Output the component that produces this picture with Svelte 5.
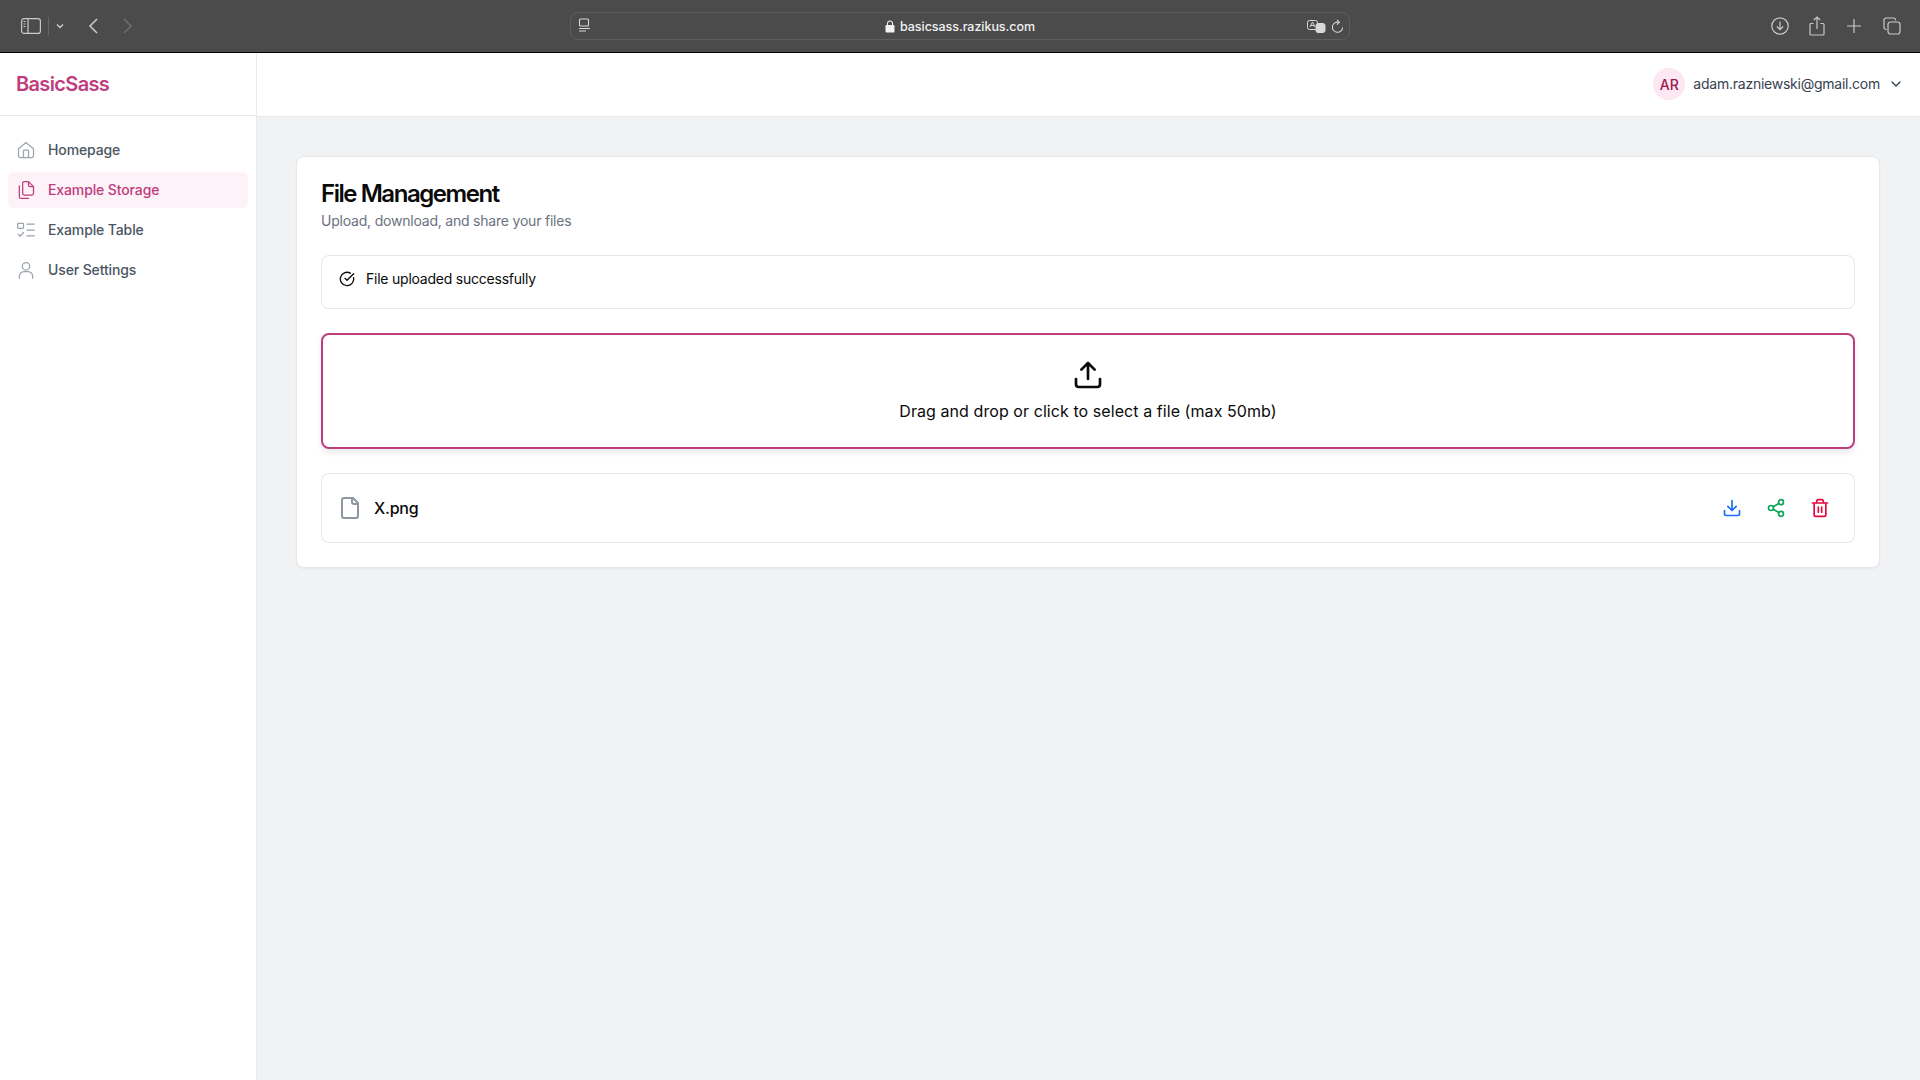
<script>
    const navItems = [
        { label: 'Homepage', icon: 'home' },
        { label: 'Example Storage', icon: 'copy', active: true },
        { label: 'Example Table', icon: 'list' },
        { label: 'User Settings', icon: 'user' }
    ];
</script>

<div class="browser">
    <div class="tools left">
        <svg class="sidebar-icon" viewBox="0 0 20 16" width="20" height="16" fill="none" stroke="currentColor" stroke-width="1.2">
            <rect x="0.6" y="0.6" width="18.8" height="14.8" rx="2.5" />
            <path d="M7 0.6v14.8M2.5 3.5h2M2.5 6h2M2.5 8.5h2" />
        </svg>
        <span class="divider"></span>
        <svg viewBox="0 0 8 6" width="8" height="6" fill="none" stroke="currentColor" stroke-width="1.5"><path d="M1 1.5l3 3 3-3" /></svg>
        <svg class="back" viewBox="0 0 10 16" width="10" height="16" fill="none" stroke="currentColor" stroke-width="1.6"><path d="M9 1L2 8l7 7" /></svg>
        <svg class="forward" viewBox="0 0 10 16" width="10" height="16" fill="none" stroke="currentColor" stroke-width="1.6"><path d="M1 1l7 7-7 7" /></svg>
    </div>

    <div class="address">
        <svg class="reader" viewBox="0 0 13 16" width="13" height="16" fill="none" stroke="currentColor" stroke-width="1.1">
            <rect x="1.5" y="1" width="9" height="7" rx="1" />
            <path d="M1 10.5h11M1 13h7" />
        </svg>
        <span class="url">
            <svg viewBox="0 0 10 13" width="10" height="13"><path fill="currentColor" d="M2 5V3.5a3 3 0 0 1 6 0V5h.5A1 1 0 0 1 9.500 6v5.500a1 1 0 0 1-1 1h-7a1 1 0 0 1-1-1V6a1 1 0 0 1 1-1zm1 0h4V3.500a2 2 0 0 0-4 0z" /></svg>
            basicsass.razikus.com
        </span>
        <span class="address-end">
            <svg viewBox="0 0 19 13" width="19" height="13" fill="none" stroke="currentColor" stroke-width="1">
                <rect x="0.5" y="0.5" width="10" height="9" rx="2" />
                <path d="M3 7l2.500-5 2.500 5M4 5.500h3" />
                <rect x="9" y="3.500" width="9" height="9" rx="2" fill="currentColor" />
            </svg>
            <svg viewBox="0 0 14 16" width="13" height="15" fill="none" stroke="currentColor" stroke-width="1.1">
                <path d="M8.500 3.500A5.500 5.500 0 1 0 12.500 9" />
                <path d="M6.500 0.800l2.500 2.700-2.500 2.500" />
            </svg>
        </span>
    </div>

    <div class="tools right">
        <svg viewBox="0 0 18 18" width="18" height="18" fill="none" stroke="currentColor" stroke-width="1.2">
            <circle cx="9" cy="9" r="8.200" />
            <path d="M9 4.500v8M5.800 9.500L9 12.700l3.200-3.200" />
        </svg>
        <svg class="share" viewBox="0 0 16 20" width="16" height="20" fill="none" stroke="currentColor" stroke-width="1.2">
            <path d="M4.500 7.500H2a1 1 0 0 0-1 1V18a1 1 0 0 0 1 1h12a1 1 0 0 0 1-1V8.500a1 1 0 0 0-1-1h-2.500" />
            <path d="M8 13V1M4.800 4L8 1l3.200 3" />
        </svg>
        <svg viewBox="0 0 14 14" width="14" height="14" fill="none" stroke="currentColor" stroke-width="1.2"><path d="M7 0v14M0 7h14" /></svg>
        <svg viewBox="0 0 18 18" width="18" height="18" fill="none" stroke="currentColor" stroke-width="1.2">
            <path d="M3.500 12.500H3a2 2 0 0 1-2-2V3a2 2 0 0 1 2-2h7.500a2 2 0 0 1 2 2v.5" />
            <rect x="5" y="5" width="12" height="12" rx="2.500" />
        </svg>
    </div>
</div>

<div class="page">
    <aside class="sidebar">
        <div class="logo">BasicSass</div>
        <nav>
            {#each navItems as item}
                <div class="nav-item" class:active={item.active}>
                    <svg viewBox="0 0 24 24" width="20" height="20" fill="none" stroke="currentColor" stroke-width="1.5" stroke-linecap="round" stroke-linejoin="round">
                        {#if item.icon === 'home'}
                            <path d="M3 10.500L12 3l9 7.500V19a2 2 0 0 1-2 2H5a2 2 0 0 1-2-2z" />
                            <path d="M9 21v-8a1 1 0 0 1 1-1h4a1 1 0 0 1 1 1v8" />
                        {:else if item.icon === 'copy'}
                            <path d="M15 2H10a2 2 0 0 0-2 2v12a2 2 0 0 0 2 2h9a2 2 0 0 0 2-2V8z" />
                            <path d="M15 2v4a2 2 0 0 0 2 2h4" />
                            <path d="M4 7v13a2 2 0 0 0 2 2h9" />
                        {:else if item.icon === 'list'}
                            <rect x="2" y="4" width="7" height="6" rx="1" />
                            <path d="M13 5h9M13 12h9M13 19h9M2.500 17l2.500 2.500L9 15" />
                        {:else}
                            <circle cx="12" cy="7.500" r="4.500" />
                            <path d="M4 22v-2.500A5.500 5.500 0 0 1 9.500 14h5a5.500 5.500 0 0 1 5.500 5.500V22" />
                        {/if}
                    </svg>
                    {item.label}
                </div>
            {/each}
        </nav>
    </aside>

    <div class="content">
        <header class="topbar">
            <span class="avatar">AR</span>
            <span class="email">adam.razniewski@gmail.com</span>
            <svg viewBox="0 0 24 24" width="16" height="16" fill="none" stroke="currentColor" stroke-width="2" stroke-linecap="round" stroke-linejoin="round"><path d="M6 9l6 6 6-6" /></svg>
        </header>

        <main>
            <section class="card">
                <h1>File Management</h1>
                <p class="subtitle">Upload, download, and share your files</p>

                <div class="alert">
                    <svg viewBox="0 0 24 24" width="16" height="16" fill="none" stroke="currentColor" stroke-width="2" stroke-linecap="round" stroke-linejoin="round">
                        <path d="M21.800 10A10 10 0 1 1 17 3.300" />
                        <path d="M9 11l3 3L22 4" />
                    </svg>
                    File uploaded successfully
                </div>

                <div class="dropzone">
                    <svg viewBox="0 0 24 24" width="32" height="32" fill="none" stroke="currentColor" stroke-width="2" stroke-linecap="round" stroke-linejoin="round">
                        <path d="M21 15v4a2 2 0 0 1-2 2H5a2 2 0 0 1-2-2v-4" />
                        <path d="M17 8l-5-5-5 5M12 3v12" />
                    </svg>
                    <span>Drag and drop or click to select a file (max 50mb)</span>
                </div>

                <div class="file-row">
                    <svg class="file-icon" viewBox="0 0 24 24" width="24" height="24" fill="none" stroke="currentColor" stroke-width="2" stroke-linecap="round" stroke-linejoin="round">
                        <path d="M15 2H6a2 2 0 0 0-2 2v16a2 2 0 0 0 2 2h12a2 2 0 0 0 2-2V7z" />
                        <path d="M14 2v4a2 2 0 0 0 2 2h4" />
                    </svg>
                    <span class="file-name">X.png</span>
                    <div class="actions">
                        <svg class="blue" viewBox="0 0 24 24" width="20" height="20" fill="none" stroke="currentColor" stroke-width="2" stroke-linecap="round" stroke-linejoin="round">
                            <path d="M21 15v4a2 2 0 0 1-2 2H5a2 2 0 0 1-2-2v-4" />
                            <path d="M7 10l5 5 5-5M12 15V3" />
                        </svg>
                        <svg class="green" viewBox="0 0 24 24" width="20" height="20" fill="none" stroke="currentColor" stroke-width="2" stroke-linecap="round" stroke-linejoin="round">
                            <circle cx="18" cy="5" r="3" />
                            <circle cx="6" cy="12" r="3" />
                            <circle cx="18" cy="19" r="3" />
                            <path d="M8.600 13.500l6.800 4M15.400 6.500l-6.800 4" />
                        </svg>
                        <svg class="red" viewBox="0 0 24 24" width="20" height="20" fill="none" stroke="currentColor" stroke-width="2" stroke-linecap="round" stroke-linejoin="round">
                            <path d="M3 6h18M19 6v14a2 2 0 0 1-2 2H7a2 2 0 0 1-2-2V6M8 6V4a2 2 0 0 1 2-2h4a2 2 0 0 1 2 2v2" />
                            <path d="M10 11v6M14 11v6" />
                        </svg>
                    </div>
                </div>
            </section>
        </main>
    </div>
</div>

<style>
    :global(body) {
        margin: 0;
        font-family: Inter, "Liberation Sans", sans-serif;
        background: #f1f2f4;
    }

    .browser {
        position: relative;
        display: flex;
        align-items: center;
        justify-content: space-between;
        box-sizing: border-box;
        height: 53px;
        padding: 0 19px 1px 21px;
        background: #4b4b4b;
        border-bottom: 1px solid #000;
        color: #c9c9c9;
    }

    .tools {
        display: flex;
        align-items: center;
    }

    .left {
        width: 600px;
    }

    .divider {
        width: 1px;
        height: 18px;
        margin: 0 7px;
        background: #666;
    }

    .back {
        margin-left: 24px;
    }

    .forward {
        margin-left: 25px;
        color: #6e6e6e;
    }

    .right {
        gap: 22px;
    }

    .share {
        margin-left: -2px;
    }

    .address {
        position: absolute;
        left: 570px;
        top: 12px;
        display: flex;
        align-items: center;
        justify-content: space-between;
        box-sizing: border-box;
        width: 780px;
        height: 28px;
        padding: 0 5px 0 7px;
        border: 1px solid #5f5f5f;
        border-radius: 8px;
        color: #d8d8d8;
    }

    .url {
        position: absolute;
        left: 314px;
        display: flex;
        align-items: center;
        gap: 5px;
        font-size: 12.5px;
        font-weight: 500;
        letter-spacing: -0.05px;
        color: #f2f2f2;
    }

    .address-end {
        display: flex;
        align-items: center;
        gap: 5px;
    }

    .page {
        display: flex;
        min-height: 1027px;
    }

    .sidebar {
        flex: 0 0 257px;
        box-sizing: border-box;
        background: #fff;
        border-right: 1px solid #e8e9eb;
    }

    .logo {
        box-sizing: border-box;
        height: 63px;
        padding: 0 16px;
        border-bottom: 1px solid #e5e7eb;
        font-size: 20px;
        font-weight: 600;
        line-height: 62px;
        letter-spacing: -0.65px;
        color: #be3d7e;
    }

    nav {
        display: flex;
        flex-direction: column;
        gap: 4px;
        padding: 16px 8px;
    }

    .nav-item {
        display: flex;
        align-items: center;
        gap: 12px;
        box-sizing: border-box;
        height: 36px;
        padding: 0 8px 1px;
        border-radius: 6px;
        font-size: 14px;
        font-weight: 500;
        letter-spacing: -0.12px;
        color: #4b5563;
    }

    .nav-item svg {
        color: #9ca3af;
    }

    .nav-item.active {
        background: #fdf2f8;
        color: #be3d7e;
    }

    .nav-item.active svg {
        color: #be3d7e;
    }

    .content {
        flex: 1;
        min-width: 0;
    }

    .topbar {
        display: flex;
        align-items: center;
        justify-content: flex-end;
        box-sizing: border-box;
        height: 64px;
        padding: 0 16px 1px;
        background: #fff;
        border-bottom: 1px solid #e8e9eb;
        font-size: 14px;
        color: #374151;
    }

    .avatar {
        display: flex;
        align-items: center;
        justify-content: center;
        width: 32px;
        height: 32px;
        border-radius: 50%;
        background: #fce7f3;
        font-weight: 500;
        color: #9d174d;
    }

    .email {
        margin: 0 8px 1px 8px;
        letter-spacing: -0.24px;
    }

    main {
        padding: 39px 40px 0 39px;
    }

    .card {
        box-sizing: border-box;
        height: 412px;
        padding: 24px 24px 24px;
        background: #fff;
        border: 1px solid #e5e7eb;
        border-radius: 8px;
        box-shadow: 0 1px 2px rgba(0, 0, 0, 0.05);
    }

    h1 {
        margin: 0;
        font-size: 24px;
        font-weight: 600;
        line-height: 26px;
        letter-spacing: -1.45px;
        color: #0a0a0a;
    }

    .subtitle {
        margin: 4px 0 0;
        font-size: 14px;
        line-height: 20px;
        letter-spacing: -0.21px;
        color: #6b7280;
    }

    .alert {
        display: flex;
        align-items: center;
        gap: 11px;
        box-sizing: border-box;
        height: 54px;
        margin-top: 24px;
        padding: 0 17px 7px;
        border: 1px solid #e5e7eb;
        border-radius: 8px;
        font-size: 14px;
        letter-spacing: -0.23px;
        color: #0a0a0a;
    }

    .alert svg {
        margin-top: 1px;
    }

    .dropzone {
        display: flex;
        flex-direction: column;
        align-items: center;
        justify-content: center;
        gap: 10px;
        box-sizing: border-box;
        height: 116px;
        margin-top: 24px;
        padding-bottom: 2px;
        border: 2px solid #be3d7e;
        border-radius: 8px;
        box-shadow: 0 4px 6px rgba(0, 0, 0, 0.08);
        font-size: 16px;
        letter-spacing: 0.07px;
        color: #0a0a0a;
    }

    .file-row {
        display: flex;
        align-items: center;
        box-sizing: border-box;
        height: 70px;
        margin-top: 24px;
        padding: 0 24px 0 16px;
        border: 1px solid #e5e7eb;
        border-radius: 8px;
    }

    .file-icon {
        color: #8f96a3;
    }

    .file-name {
        margin-left: 12px;
        font-size: 16px;
        font-weight: 500;
        letter-spacing: -0.2px;
        color: #0a0a0a;
    }

    .actions {
        display: flex;
        gap: 24px;
        margin-left: auto;
    }

    .blue {
        color: #1a6ef5;
    }

    .green {
        color: #0fa55c;
    }

    .red {
        color: #e4083f;
    }
</style>
